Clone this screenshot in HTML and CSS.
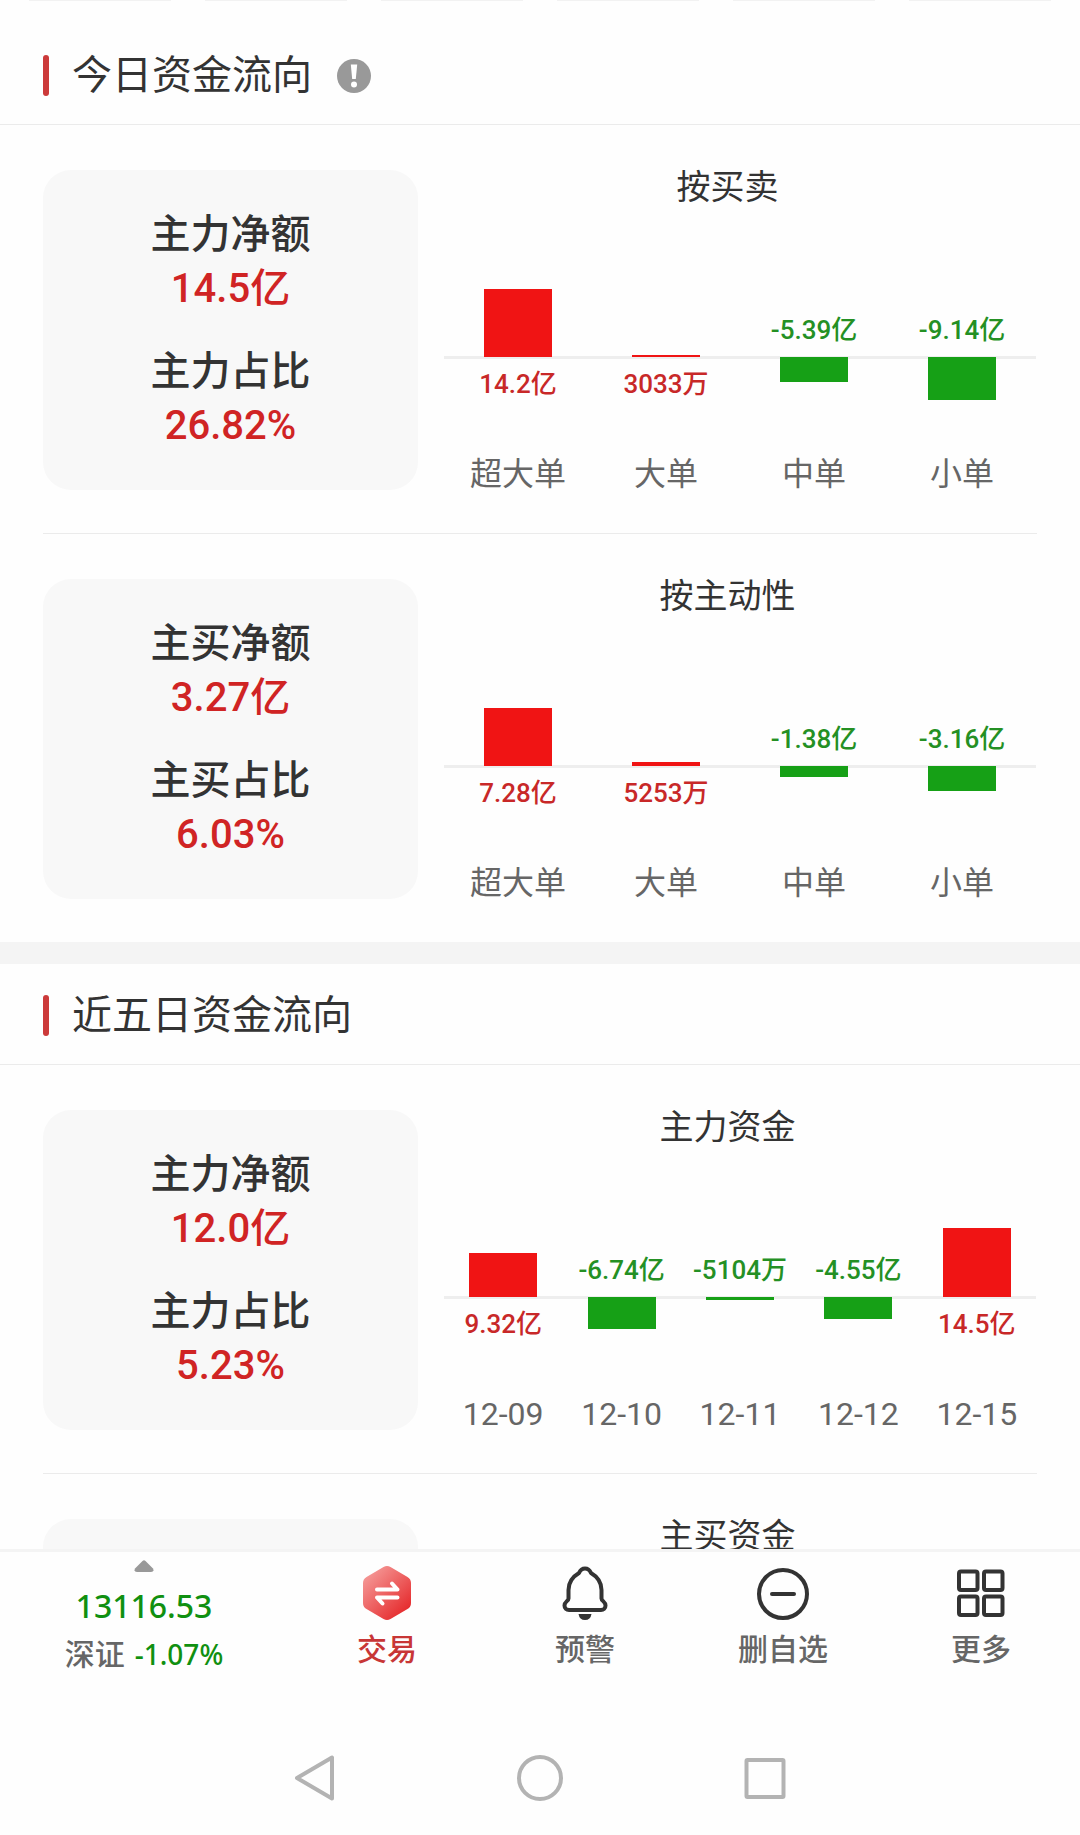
FILE: index.html
```html
<!DOCTYPE html>
<html lang="zh-CN">
<head>
<meta charset="utf-8">
<meta name="viewport" content="width=device-width, initial-scale=1">
<title>资金流向</title>
<link rel="stylesheet" href="styles.css">
</head>
<body>
<main class="content">
  <div class="tabs-edge"><span></span><span></span><span></span><span></span><span></span><span></span></div>

  <section class="section">
    <header class="section-head">
      <h2 class="section-title">今日资金流向</h2>
      <button class="info" type="button" aria-label="说明">
        <svg viewBox="0 0 34 34" width="34" height="34"><circle cx="17" cy="17" r="17" fill="#999"/><path d="M13.800 5.500h6.400l-1.400 14.500h-3.600z" fill="#fff"/><circle cx="17" cy="25.500" r="3" fill="#fff"/></svg>
      </button>
    </header>

    <div class="row">
      <div class="card">
        <div class="stat"><div class="stat-name">主力净额</div><div class="stat-value">14.5亿</div></div>
        <div class="stat"><div class="stat-name">主力占比</div><div class="stat-value">26.82%</div></div>
      </div>
      <div class="chart">
        <h3 class="chart-title">按买卖</h3>
        <div class="plot">
          <div class="col up"><div class="bar" style="height:68px"></div><div class="value">14.2亿</div><div class="name">超大单</div></div>
          <div class="col up"><div class="bar" style="height:2px"></div><div class="value">3033万</div><div class="name">大单</div></div>
          <div class="col down"><div class="value">-5.39亿</div><div class="bar" style="height:25px"></div><div class="name">中单</div></div>
          <div class="col down"><div class="value">-9.14亿</div><div class="bar" style="height:43px"></div><div class="name">小单</div></div>
        </div>
      </div>
    </div>

    <div class="row">
      <div class="card">
        <div class="stat"><div class="stat-name">主买净额</div><div class="stat-value">3.27亿</div></div>
        <div class="stat"><div class="stat-name">主买占比</div><div class="stat-value">6.03%</div></div>
      </div>
      <div class="chart">
        <h3 class="chart-title">按主动性</h3>
        <div class="plot">
          <div class="col up"><div class="bar" style="height:58px"></div><div class="value">7.28亿</div><div class="name">超大单</div></div>
          <div class="col up"><div class="bar" style="height:4px"></div><div class="value">5253万</div><div class="name">大单</div></div>
          <div class="col down"><div class="value">-1.38亿</div><div class="bar" style="height:11px"></div><div class="name">中单</div></div>
          <div class="col down"><div class="value">-3.16亿</div><div class="bar" style="height:25px"></div><div class="name">小单</div></div>
        </div>
      </div>
    </div>
  </section>

  <section class="section">
    <header class="section-head">
      <h2 class="section-title">近五日资金流向</h2>
    </header>

    <div class="row">
      <div class="card">
        <div class="stat"><div class="stat-name">主力净额</div><div class="stat-value">12.0亿</div></div>
        <div class="stat"><div class="stat-name">主力占比</div><div class="stat-value">5.23%</div></div>
      </div>
      <div class="chart">
        <h3 class="chart-title">主力资金</h3>
        <div class="plot">
          <div class="col up"><div class="bar" style="height:44px"></div><div class="value">9.32亿</div><div class="name">12-09</div></div>
          <div class="col down"><div class="value">-6.74亿</div><div class="bar" style="height:32px"></div><div class="name">12-10</div></div>
          <div class="col down"><div class="value">-5104万</div><div class="bar" style="height:3px"></div><div class="name">12-11</div></div>
          <div class="col down"><div class="value">-4.55亿</div><div class="bar" style="height:22px"></div><div class="name">12-12</div></div>
          <div class="col up"><div class="bar" style="height:69px"></div><div class="value">14.5亿</div><div class="name">12-15</div></div>
        </div>
      </div>
    </div>

    <div class="row">
      <div class="card"></div>
      <div class="chart">
        <h3 class="chart-title">主买资金</h3>
      </div>
    </div>
  </section>
</main>

<nav class="toolbar">
  <button class="index" type="button">
    <svg class="caret" viewBox="0 0 20 12" width="20" height="12"><path d="M8.500 1Q10-.500 11.500 1l7.500 7.500Q20.500 12 17 12H3Q-.500 12 1 8.500z" fill="#999"/></svg>
    <span class="index-price">13116.53</span>
    <span class="index-line"><span class="index-name">深证</span><span class="index-change">-1.07%</span></span>
  </button>
  <button class="tool tool-trade" type="button">
    <svg viewBox="0 0 54 54" width="54" height="54">
      <defs><linearGradient id="hex" x1="0.100" y1="0.100" x2="0.800" y2="0.900"><stop offset="0" stop-color="#f59a98"/><stop offset="1" stop-color="#e62e30"/></linearGradient></defs>
      <path d="M23.500 1Q27-1 30.500 1l17 10Q51 13 51 17v20q0 4-3.500 6l-17 10Q27 55 23.500 53l-17-10Q3 41 3 37V17q0-4 3.500-6z" fill="url(#hex)"/>
      <path d="M17 23.500H37.500L32 17.500M37.500 31.500H17l5.500 6" fill="none" stroke="#fff" stroke-width="4" stroke-linecap="round" stroke-linejoin="round"/>
    </svg>
    <span>交易</span>
  </button>
  <button class="tool" type="button">
    <svg viewBox="0 0 54 54" width="54" height="54">
      <path d="M27 2.500c-3.500 0-5 2.200-6 4.500-6 3.500-10.500 9.500-10.500 17v8.500c0 2.500-4 3-4 7 0 3 2 4.500 4.500 4.500h32c2.500 0 4.500-1.500 4.500-4.500 0-4-4-4.500-4-7V24c0-7.500-4.500-13.500-10.500-17-1-2.300-2.500-4.500-6-4.500z" fill="none" stroke="#333" stroke-width="4" stroke-linejoin="round"/>
      <path d="M20.500 48h13q-1 6-6.500 6t-6.500-6z" fill="#333"/>
    </svg>
    <span>预警</span>
  </button>
  <button class="tool" type="button">
    <svg viewBox="0 0 54 54" width="54" height="54" fill="none" stroke="#333" stroke-width="4" stroke-linecap="round"><circle cx="27" cy="28" r="24"/><path d="M16 28h22"/></svg>
    <span>删自选</span>
  </button>
  <button class="tool" type="button">
    <svg viewBox="0 0 54 54" width="54" height="54" fill="none" stroke="#333" stroke-width="4"><rect x="5" y="5.500" width="18.500" height="18.500" rx="2"/><rect x="30" y="5.500" width="18.500" height="18.500" rx="2"/><rect x="5" y="30.500" width="18.500" height="18.500" rx="2"/><rect x="30" y="30.500" width="18.500" height="18.500" rx="2"/></svg>
    <span>更多</span>
  </button>
</nav>

<div class="system-bar">
  <button type="button" aria-label="返回"><svg viewBox="0 0 46 46" width="46" height="46"><path d="M40 2.500V43.500L5 23z"/></svg></button>
  <button type="button" aria-label="主页"><svg viewBox="0 0 46 46" width="46" height="46"><circle cx="23" cy="23" r="21"/></svg></button>
  <button type="button" aria-label="最近任务"><svg viewBox="0 0 46 46" width="46" height="46"><rect x="4.500" y="5" width="37" height="37" rx="1"/></svg></button>
</div>
</body>
</html>
```
FILE: styles.css
```css
* { box-sizing: border-box; }

body {
  margin: 0;
  height: 100vh;
  display: flex;
  flex-direction: column;
  background: #fefefe;
  color: #333;
  font-family: Roboto, "Noto Sans CJK SC", sans-serif;
}

h2, h3 { margin: 0; font-weight: 400; }

button {
  margin: 0;
  padding: 0;
  border: 0;
  background: none;
  color: inherit;
  font: inherit;
}

svg { display: block; }

.content {
  flex: 1;
  min-height: 0;
  overflow: hidden;
}

.tabs-edge {
  display: grid;
  grid-template-columns: repeat(6, 1fr);
  gap: 34px;
  height: 24px;
  padding: 0 29px;
}
.tabs-edge span { height: 1px; background: #f2f2f2; }

.section + .section { border-top: 22px solid #f4f4f4; }

.section-head {
  display: flex;
  align-items: center;
  height: 101px;
  padding: 3px 43px 0;
  border-bottom: 1px solid #ebebeb;
}
.section-head::before {
  content: "";
  width: 6px;
  height: 41px;
  margin-right: 23px;
  border-radius: 3px;
  background: #cc3a3a;
}
.section-title { font-size: 40px; line-height: 48px; }
.info { margin-left: 25px; }

.row {
  display: flex;
  margin: 0 43px;
  padding: 45px 0 43px;
}
.row + .row { border-top: 1px solid #ebebeb; }

.card {
  flex: 0 0 375px;
  min-height: 320px;
  display: flex;
  flex-direction: column;
  justify-content: center;
  gap: 29px;
  border-radius: 28px;
  background: #f8f8f8;
  text-align: center;
  font-size: 40px;
  line-height: 54px;
  font-weight: 500;
}
.stat-value { color: #d02424; }

.chart { flex: 1; }
.chart-title {
  font-size: 34px;
  line-height: 34px;
  text-align: center;
}

/* The zero line runs between the first and second grid rows. */
.plot {
  display: grid;
  grid-auto-flow: column;
  grid-auto-columns: 1fr;
  margin: 0 1px 0 26px;
  background: linear-gradient(#eee, #eee) 0 152px / 100% 3px no-repeat;
}
.col {
  display: grid;
  grid-template-rows: 153px 101px 32px;
  justify-items: center;
  white-space: nowrap;
}
.bar { width: 68px; }
.value { font-size: 26px; line-height: 32px; font-weight: 500; }
.name { font-size: 32px; line-height: 32px; color: #666; }

.up .bar { align-self: end; background: #f01414; }
.up .value { margin-top: 11px; color: #c82828; }
.down .bar { background: #16a016; }
.down .value { align-self: end; margin-bottom: 11px; color: #249024; }

.toolbar {
  display: grid;
  grid-template-columns: 16fr repeat(4, 11fr);
  border-top: 3px solid #f4f4f4;
  color: #666;
  font-size: 30px;
  font-weight: 500;
}
.index, .tool {
  display: flex;
  flex-direction: column;
  align-items: center;
  justify-content: flex-start;
}
.tool { padding-top: 14px; gap: 12px; line-height: 36px; }
.tool-trade { color: #c83636; }

.index {
  padding-top: 8px;
  font-family: "Noto Sans", "Noto Sans CJK SC", sans-serif;
}
.index-price {
  margin-top: 14px;
  font-size: 32px;
  line-height: 40px;
  color: #109010;
}
.index-line {
  display: flex;
  gap: 10px;
  margin-top: 8px;
  line-height: 40px;
}
.index-change { font-size: 28px; color: #109010; }

.system-bar {
  display: flex;
  justify-content: center;
  gap: 179px;
  padding: 81px 0 34px;
}
.system-bar svg {
  fill: none;
  stroke: #b3b3b3;
  stroke-width: 4;
  stroke-linejoin: round;
}
```
